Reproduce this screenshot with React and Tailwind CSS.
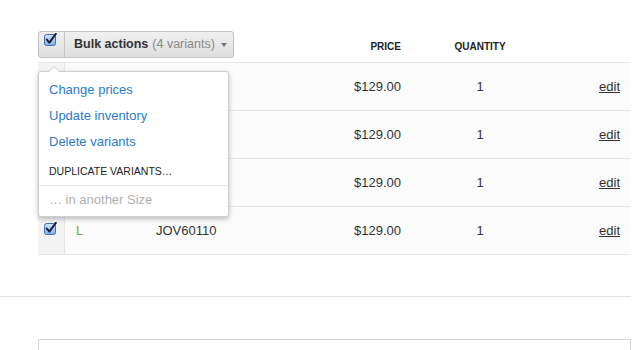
import React from "react";

const Check = () => (
  <svg width="13" height="13" viewBox="0 0 13 13" className="block">
    <defs>
      <linearGradient id="cbg" x1="0" y1="0" x2="0" y2="1">
        <stop offset="0" stopColor="#cfe3fb" />
        <stop offset="1" stopColor="#7fb0ea" />
      </linearGradient>
    </defs>
    <rect x="0.5" y="1.5" width="11" height="11" rx="2" fill="url(#cbg)" stroke="#3f6fb5" />
    <path d="M2.8 6.6 L5.4 9.6 L11.8 0.8" fill="none" stroke="#1c2233" strokeWidth="2" strokeLinecap="round" strokeLinejoin="round" />
  </svg>
);

// first three rows sit under the open menu
const rows = [
  { id: 1, size: "", sku: "" },
  { id: 2, size: "", sku: "" },
  { id: 3, size: "", sku: "" },
  { id: 4, size: "L", sku: "JOV60110" },
];

export default function App() {
  return (
    <div className="w-[640px] h-[350px] overflow-hidden bg-white text-[13px] text-[#333]" style={{ fontFamily: '"Liberation Sans", Arial, sans-serif' }}>
      <div className="relative ml-[38px] w-[592px] pt-[31px]">
        {/* header */}
        <div className="flex h-[31px] items-start">
          <div className="flex h-[27px] w-[196px] items-stretch rounded-[3px] border border-[#c4c4c4] bg-gradient-to-b from-[#f0f0f0] to-[#dedede]">
            <div className="w-[26px] border-r border-[#c4c4c4] pl-[5px] pt-[1px]">
              <Check />
            </div>
            <div className="flex flex-1 items-center whitespace-nowrap pl-[9px] text-[12.5px]">
              <span className="font-bold">Bulk actions</span>
              <span className="ml-[4px] text-[#8a8a8a]">(4 variants)</span>
              <span className="ml-[6px] mt-[1px] h-0 w-0 border-x-[3.5px] border-t-[4px] border-x-transparent border-t-[#7a7a7a]" />
            </div>
          </div>
          <div className="w-[87px]" />
          <div className="w-[90px] pr-[10px] pt-[8px] text-right text-[10px] font-bold text-[#222]">PRICE</div>
          <div className="w-[138px] pt-[8px] text-center text-[10px] font-bold text-[#222]">QUANTITY</div>
        </div>

        {/* rows */}
        <div className="border-t border-[#e6e6e6]">
          {rows.map((r) => (
            <div key={r.id} className="flex h-[48px] items-stretch border-b border-[#e6e6e6] bg-[#fbfbfb]">
              <div className="w-[27px] border-r border-[#e6e6e6] bg-[#f4f4f4] pl-[6px] pt-[15px]">
                <Check />
              </div>
              <div className="flex w-[80px] items-center pl-[11px] text-[#7aa83a]">{r.size}</div>
              <div className="flex w-[176px] items-center pl-[11px]">{r.sku}</div>
              <div className="flex w-[90px] items-center justify-end pr-[10px]">$129.00</div>
              <div className="flex w-[138px] items-center justify-center">1</div>
              <div className="flex w-[81px] items-center justify-end pr-[10px]">
                <a href="#" className="text-[#333] underline">edit</a>
              </div>
            </div>
          ))}
        </div>

        {/* dropdown */}
        <div className="absolute left-0 top-[71px] w-[191px] rounded-[3px] border border-[#cfcfcf] bg-white shadow-[0_2px_5px_rgba(0,0,0,0.25)]">
          <div className="absolute -top-[6px] left-[9px] h-0 w-0 border-x-[6px] border-b-[6px] border-x-transparent border-b-[#cfcfcf]" />
          <div className="absolute -top-[5px] left-[10px] h-0 w-0 border-x-[5px] border-b-[5px] border-x-transparent border-b-white" />
          <div className="pt-[9px]">
            <div className="h-[26px] pl-[10px] leading-[18px] text-[#2a7ccc]">Change prices</div>
            <div className="h-[26px] pl-[10px] leading-[18px] text-[#2a7ccc]">Update inventory</div>
            <div className="h-[26px] pl-[10px] leading-[18px] text-[#2a7ccc]">Delete variants</div>
            <div className="pb-[7px] pl-[10px] pt-[5px] text-[10.5px] leading-[14px] text-[#222]">DUPLICATE VARIANTS…</div>
            <div className="border-t border-[#e6e6e6] pb-[8px] pl-[10px] pt-[6px] leading-[16px] text-[#b0b0b0]">… in another Size</div>
          </div>
        </div>
      </div>

      <div className="mt-[41px] w-[631px] border-t border-[#e3e3e3]" />
      <div className="ml-[38px] mt-[42px] h-[40px] w-[593px] border border-[#d8d8d8]" />
    </div>
  );
}
